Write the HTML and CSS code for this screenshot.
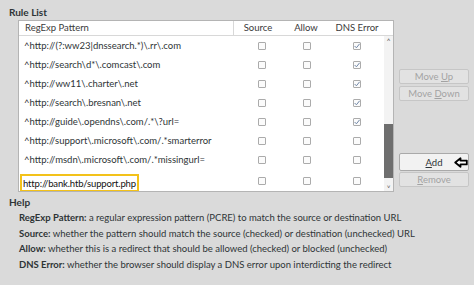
FILE: index.html
```html
<!DOCTYPE html>
<html lang="en">
<head>
    <meta charset="UTF-8">
    <title>Rule List</title>
    <link rel="stylesheet" href="styles.css">
</head>
<body>
    <div class="page">
        <div class="section-title">Rule List</div>

        <div class="rules">
            <!-- list of rules -->
            <div class="list">
                <div class="list-head">
                    <div class="col-pattern">RegExp Pattern</div>
                    <div class="col-check sep">Source</div>
                    <div class="col-check">Allow</div>
                    <div class="col-check">DNS Error</div>
                    <div></div>
                </div>
                <div class="list-body">
                    <div class="rows" id="rows"></div>
                    <div class="scrollbar">
                        <span class="arrow">&#708;</span>
                        <div class="track"><div class="thumb"></div></div>
                        <span class="arrow">&#709;</span>
                    </div>
                </div>
            </div>

            <!-- buttons -->
            <div class="buttons">
                <button class="btn" disabled>Move <u>U</u>p</button>
                <button class="btn" disabled>Move <u>D</u>own</button>
                <div class="spacer"></div>
                <button class="btn btn-add"><u>A</u>dd
                    <svg class="pointer" width="14" height="11" viewBox="0 0 14 11">
                        <path d="M1.2 5.5 L6.5 1.2 L6.5 3.6 L12.8 3.6 L12.8 7.4 L6.5 7.4 L6.5 9.8 Z" fill="#fff" stroke="#000" stroke-width="1.8" stroke-linejoin="round"/>
                    </svg>
                </button>
                <button class="btn" disabled><u>R</u>emove</button>
            </div>
        </div>

        <div class="section-title help-title">Help</div>
        <div class="help">
            <p><b>RegExp Pattern:</b> a regular expression pattern (PCRE) to match the source or destination URL</p>
            <p><b>Source:</b> whether the pattern should match the source (checked) or destination (unchecked) URL</p>
            <p><b>Allow:</b> whether this is a redirect that should be allowed (checked) or blocked (unchecked)</p>
            <p><b>DNS Error:</b> whether the browser should display a DNS error upon interdicting the redirect</p>
        </div>
    </div>

    <script>
        var rules = [
            ['^http://(?:ww23|dnssearch.*)\\.rr\\.com', false, false, true],
            ['^http://search\\d*\\.comcast\\.com', false, false, true],
            ['^http://ww11\\.charter\\.net', false, false, true],
            ['^http://search\\.bresnan\\.net', false, false, true],
            ['^http://guide\\.opendns\\.com/.*\\?url=', false, false, true],
            ['^http://support\\.microsoft\\.com/.*smarterror', false, false, false],
            ['^http://msdn\\.microsoft\\.com/.*missingurl=', false, false, false],
            ['http://bank.htb/support.php', false, false, false, true]
        ];

        var box = document.getElementById('rows');
        var check = '<svg width="6" height="6" viewBox="0 0 6 6"><path d="M0.6 3 L2.4 4.8 L5.6 0.8" fill="none" stroke="#6f86a6" stroke-width="1"/></svg>';

        rules.forEach(function (r) {
            var row = document.createElement('div');
            row.className = 'row';
            var html;
            if (r[4]) {
                html = '<div class="cell-pattern editing"><input class="edit" type="text" value="' + r[0] + '"></div>';
            } else {
                html = '<div class="cell-pattern"></div>';
            }
            for (var i = 1; i <= 3; i++) {
                html += '<div class="cell-check c' + i + '"><span class="cb">' + (r[i] ? check : '') + '</span></div>';
            }
            row.innerHTML = html;
            if (!r[4]) row.firstChild.textContent = r[0];
            box.appendChild(row);
        });
    </script>
</body>
</html>
```

FILE: styles.css
```css
body {
    margin: 0;
    background: #dadada;
    font-family: Lato, "Noto Sans", sans-serif;
    font-size: 9.5px;
    color: #2e3436;
}

.page {
    width: 474px;
    height: 285px;
    padding: 5px 5px 0 9px;
    box-sizing: border-box;
}

.section-title {
    font-size: 10px;
    font-weight: bold;
    line-height: 14px;
    height: 14px;
    margin-bottom: 1px;
}

.rules {
    display: flex;
    margin-left: 9px;
}

/* list */
.list {
    width: 376px;
    height: 172px;
    box-sizing: border-box;
    border: 1px solid #b4b4b4;
    background: #fff;
    overflow: hidden;
}

.list-head {
    display: grid;
    grid-template-columns: 214px 49px 48px 54px 9px;
    height: 14px;
    border-bottom: 1px solid #d8d8d8;
    line-height: 13px;
    color: #3a3a3a;
}

.list-head .col-pattern {
    padding-left: 6px;
}

.list-head .col-check {
    text-align: center;
}

.list-head .sep {
    border-left: 1px solid #d8d8d8;
}

.list-body {
    display: flex;
    height: 157px;
}

.rows {
    width: 365px;
}

.row {
    display: grid;
    grid-template-columns: 214px 49px 48px 54px;
    height: 19px;
    align-items: center;
}

.cell-pattern {
    padding-left: 5px;
    white-space: nowrap;
}

.cell-pattern.editing {
    padding-left: 1px;
    align-self: start;
    padding-top: 5px;
}

.edit {
    width: 119px;
    height: 18px;
    box-sizing: border-box;
    border: 2px solid #f3c21a;
    padding: 0 0 0 1px;
    margin: 0;
    font-family: inherit;
    font-size: 9.5px;
    letter-spacing: -0.15px;
    color: #111;
    background: #fff;
    outline: none;
}

.cell-check {
    display: flex;
    justify-content: center;
}

.cell-check.c1 {
    padding-left: 8px;
}

.cell-check.c2 {
    padding-left: 2px;
}

.cb {
    width: 8px;
    height: 8px;
    box-sizing: border-box;
    border: 1px solid #ababab;
    border-radius: 1px;
    background: #fbfbfb;
    display: flex;
    align-items: center;
    justify-content: center;
}

.scrollbar {
    width: 9px;
    background: #f3f3f3;
    display: flex;
    flex-direction: column;
    align-items: center;
}

.arrow {
    font-size: 8px;
    line-height: 8px;
    height: 8px;
    color: #555;
    margin: 1px 0;
}

.track {
    flex: 1;
    width: 100%;
    position: relative;
}

.thumb {
    position: absolute;
    left: 0;
    right: 0;
    top: 78px;
    height: 54px;
    background: #6e6e6e;
}

/* buttons */
.buttons {
    width: 70px;
    margin-left: 5px;
    padding-top: 49px;
    display: flex;
    flex-direction: column;
}

.btn {
    position: relative;
    height: 15px;
    margin-bottom: 2px;
    padding: 0;
    border: 1px solid #c6c6c6;
    border-radius: 2px;
    background: #e2e2e2;
    font-family: inherit;
    font-size: 9.5px;
    line-height: 13px;
    color: #a2a2a2;
}

.spacer {
    height: 50px;
}

.btn-add {
    height: 18px;
    margin-bottom: 1px;
    background: #f2f2f2;
    border-color: #a9a9a9;
    color: #2e3436;
}

.btn-add .pointer {
    position: absolute;
    right: 0;
    top: 3px;
}

/* help */
.help-title {
    margin-top: 3px;
    margin-bottom: 1px;
}

.help {
    padding-left: 10px;
}

.help p {
    margin: 0;
    line-height: 15.5px;
    white-space: nowrap;
}
```
